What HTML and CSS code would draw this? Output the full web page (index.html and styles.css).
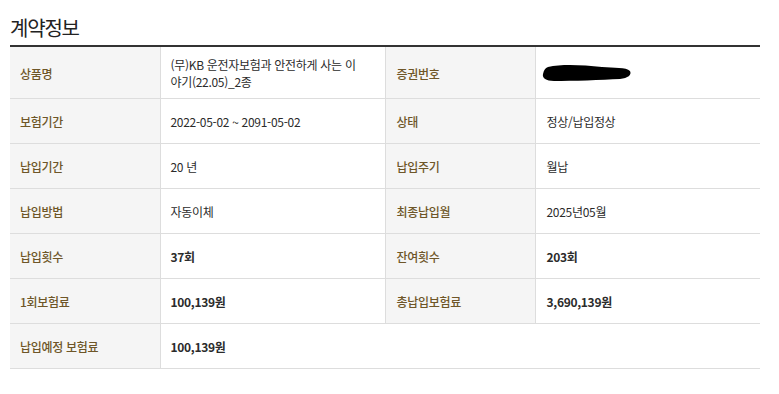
FILE: index.html
```html
<!DOCTYPE html>
<html lang="ko">
<head>
<meta charset="utf-8">
<link rel="stylesheet" href="styles.css">
</head>
<body>
<section class="panel">
  <h2 class="title">계약정보</h2>
  <table class="info">
    <colgroup>
      <col class="c-label"><col class="c-value"><col class="c-label"><col class="c-value">
    </colgroup>
    <tbody>
      <tr class="tall">
        <th>상품명</th>
        <td>(무)KB 운전자보험과 안전하게 사는 이<br>야기(22.05)_2종</td>
        <th>증권번호</th>
        <td><svg class="redact" width="90" height="18" viewBox="0 0 90 18"><path d="M6 3 C20 0 40 1 60 3 C72 4 84 3 88 7 C90 11 86 14 78 15 C60 16 30 17 12 17 C4 17 0 14 1 10 C2 6 3 4 6 3 Z" fill="#000"/></svg></td>
      </tr>
      <tr>
        <th>보험기간</th>
        <td>2022-05-02 ~ 2091-05-02</td>
        <th>상태</th>
        <td>정상/납입정상</td>
      </tr>
      <tr>
        <th>납입기간</th>
        <td>20 년</td>
        <th>납입주기</th>
        <td>월납</td>
      </tr>
      <tr>
        <th>납입방법</th>
        <td>자동이체</td>
        <th>최종납입월</th>
        <td>2025년05월</td>
      </tr>
      <tr>
        <th>납입횟수</th>
        <td class="strong">37회</td>
        <th>잔여횟수</th>
        <td class="strong">203회</td>
      </tr>
      <tr>
        <th>1회보험료</th>
        <td class="strong">100,139원</td>
        <th>총납입보험료</th>
        <td class="strong">3,690,139원</td>
      </tr>
      <tr>
        <th>납입예정 보험료</th>
        <td class="strong" colspan="3">100,139원</td>
      </tr>
    </tbody>
  </table>
</section>
</body>
</html>
```
FILE: styles.css
```css
html, body {
  margin: 0;
  padding: 0;
  background: #fff;
}
body {
  font-family: "Noto Sans CJK KR", "Noto Sans", sans-serif;
  color: #333;
}
.panel {
  padding: 16px 19px 0 10px;
}
.title {
  margin: 0 0 5px;
  font-size: 20px;
  line-height: 24px;
  font-weight: 400;
  letter-spacing: -1.2px;
  color: #222;
}
.info {
  width: 750px;
  border-collapse: collapse;
  table-layout: fixed;
  border-top: 2px solid #333;
  font-size: 12px;
  letter-spacing: -0.3px;
}
.c-label { width: 150px; }
.c-value { width: 225px; }
.info th,
.info td {
  height: 28px;
  padding: 8px 10px 8px 10px;
  line-height: 17px;
  text-align: left;
  vertical-align: middle;
  border-bottom: 1px solid #ddd;
}
.info tr.tall th,
.info tr.tall td {
  padding-top: 9px;
  padding-bottom: 8px;
}
.info th {
  background: #f5f5f5;
  color: #6e5628;
  font-weight: 500;
  border-right: 1px solid #ddd;
}
.info td {
  color: #2b2b2b;
  font-weight: 400;
}
.info td:nth-child(2) {
  border-right: 1px solid #ddd;
}
.info td[colspan] {
  border-right: none;
}
.info td.strong {
  font-weight: 700;
}
.info th:nth-child(3),
.info th:nth-child(3) + td {
  padding-left: 11px;
}
.redact {
  display: block;
  margin-left: -5px;
}
```
